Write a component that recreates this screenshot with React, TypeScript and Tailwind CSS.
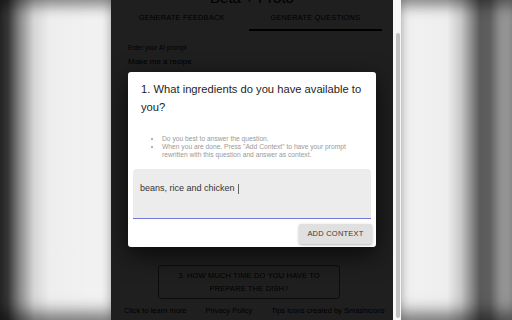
export default function App() {
  return (
    <div className="w-[512px] h-[320px] flex overflow-hidden font-['Liberation_Sans',Arial,sans-serif]">
      {/* left backdrop */}
      <div className="w-[111px] h-full shrink-0 bg-[linear-gradient(to_right,#2c2c2c_0px,#383838_8px,#8a8a8a_20px,#d6d6d6_34px,#eeeeee_50px,#f3f3f3_111px)] shadow-[inset_0_12px_14px_-6px_rgba(0,0,0,0.45),inset_0_-14px_16px_-6px_rgba(0,0,0,0.5)]" />

      {/* extension popup */}
      <div className="w-[282px] h-full shrink-0 relative overflow-hidden bg-white">
        <div className="flex flex-col">
          <div className="-mt-[11px] h-[18px] text-center text-[15px] leading-[18px] text-black">Beta + Proto</div>

          <div className="ml-[4px] w-[267px] flex">
            <div className="flex-1 h-[24px] pb-[2px] flex items-center justify-center text-[7.5px] uppercase tracking-[0.02em] text-black">
              Generate Feedback
            </div>
            <div className="flex-1 h-[24px] flex items-center justify-center text-[7.5px] uppercase tracking-[0.02em] text-black border-b-2 border-black">
              Generate Questions
            </div>
          </div>

          <div className="mt-[13px] ml-[17px] text-[6.4px] leading-[8px] text-black">Enter your AI prompt</div>
          <div className="mt-[4px] ml-[17px] text-[8px] leading-[11px] text-black">Make me a recipe</div>

          <div className="mt-[198px] ml-[47px] w-[182px] border border-black/60 rounded-[3px] py-[3px] text-center text-[7.5px] leading-[13px] uppercase tracking-[0.02em] text-black">
            3. How much time do you have to prepare the dish?
          </div>

          <div className="mt-[7px] ml-[13px] flex gap-[19px] whitespace-nowrap text-[7.5px] leading-[10px] text-black">
            <span>Click to learn more</span>
            <span>Privacy Policy</span>
            <span>Tips icons created by Smashicons</span>
          </div>
        </div>

        {/* modal backdrop */}
        <div className="absolute inset-0 bg-black/[0.88]" />

        {/* dialog */}
        <div className="absolute left-[17px] top-[72px] w-[248px] h-[175px] bg-white rounded-[3px] shadow-[0_8px_24px_rgba(0,0,0,0.7)] flex flex-col px-[5px]">
          <div className="px-[8px] pt-[8px] text-[11.2px] leading-[18px] text-[#1e1e1e]">
            1. What ingredients do you have available to you?
          </div>
          <ul className="mt-[19px] ml-[8px] pl-[21px] pr-[8px] list-disc text-[6.7px] leading-[8px] text-[#999]">
            <li>Do you best to answer the question.</li>
            <li>When you are done. Press "Add Context" to have your prompt rewritten with this question and answer as context.</li>
          </ul>
          <div className="mt-[10px] h-[50px] bg-[#ececec] rounded-t-[4px] border-b border-[#757ad8] pt-[13px] pl-[7px] text-[9px] leading-[12px] text-[#333]">
            beans, rice and chicken
            <span className="inline-block w-px h-[10px] bg-[#666] ml-[3px] align-middle" />
          </div>
          <div className="mt-[5px] flex justify-end -mr-[1px]">
            <div className="h-[20px] w-[73px] flex items-center justify-center bg-[#e0e0e0] rounded-[2px] shadow-[0_1px_3px_rgba(0,0,0,0.3)] text-[7.5px] uppercase tracking-[0.03em] text-[#3a3a3a]">
              Add Context
            </div>
          </div>
        </div>
      </div>

      {/* popup scrollbar */}
      <div className="w-[8px] h-full shrink-0 bg-[#f7f7f7] pt-[33px] pl-[3px]">
        <div className="w-[4px] h-[285px] bg-[#c1c1c1] rounded-full" />
      </div>

      {/* right backdrop */}
      <div className="flex-1 h-full bg-[linear-gradient(to_right,#f2f2f2_0px,#eeeeee_46px,#c8c8c8_60px,#5a5a5a_79px,#5f5f5f_89px,#8e8e8e_99px,#a8a8a8_111px)] shadow-[inset_0_12px_14px_-6px_rgba(0,0,0,0.45),inset_0_-14px_16px_-6px_rgba(0,0,0,0.5)]" />
    </div>
  );
}
